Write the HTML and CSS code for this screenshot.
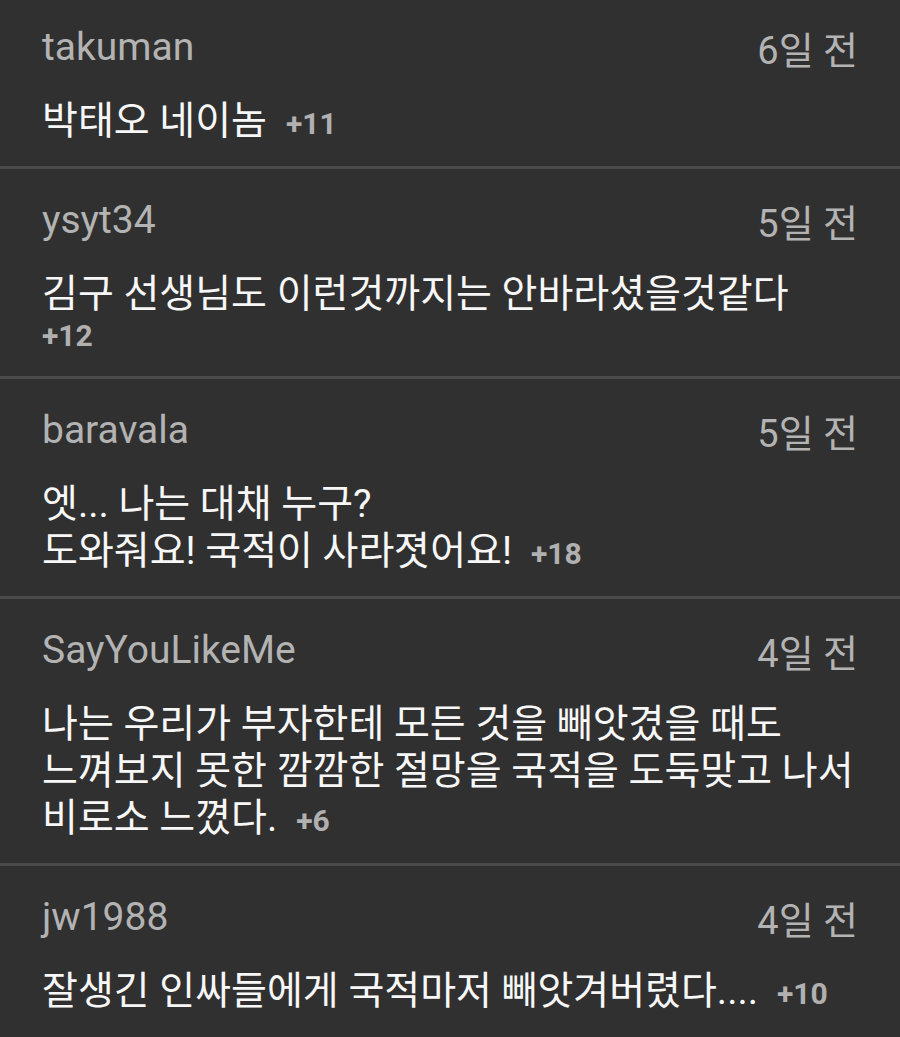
FILE: index.html
```html
<!DOCTYPE html>
<html lang="ko">
<head>
<meta charset="utf-8">
<link rel="stylesheet" href="styles.css">
</head>
<body>
<ul class="comments">
  <li class="comment">
    <div class="meta"><span class="user">takuman</span><span class="date">6일 전</span></div>
    <p class="body"><span class="text">박태오 네이놈</span> <span class="votes">+11</span></p>
  </li>
  <li class="comment">
    <div class="meta"><span class="user">ysyt34</span><span class="date">5일 전</span></div>
    <p class="body"><span class="text">김구 선생님도 이런것까지는 안바라셨을것같다</span><br><span class="votes">+12</span></p>
  </li>
  <li class="comment">
    <div class="meta"><span class="user">baravala</span><span class="date">5일 전</span></div>
    <p class="body"><span class="text">엣... 나는 대채 누구?<br>도와줘요! 국적이 사라졋어요!</span> <span class="votes">+18</span></p>
  </li>
  <li class="comment">
    <div class="meta"><span class="user">SayYouLikeMe</span><span class="date">4일 전</span></div>
    <p class="body"><span class="text">나는 우리가 부자한테 모든 것을 빼앗겼을 때도<br>느껴보지 못한 깜깜한 절망을 국적을 도둑맞고 나서<br>비로소 느꼈다.</span> <span class="votes">+6</span></p>
  </li>
  <li class="comment">
    <div class="meta"><span class="user">jw1988</span><span class="date">4일 전</span></div>
    <p class="body"><span class="text">잘생긴 인싸들에게 국적마저 빼앗겨버렸다....</span> <span class="votes">+10</span></p>
  </li>
</ul>
</body>
</html>
```

FILE: styles.css
```css
html, body {
  margin: 0;
  padding: 0;
  background: #303030;
}
body {
  font-family: Roboto, "Noto Sans CJK KR", sans-serif;
  width: 900px;
  height: 1037px;
  overflow: hidden;
}
.comments {
  list-style: none;
  margin: 0;
  padding: 0;
}
.comment {
  padding: 29px 42px 21px 42px;
  border-bottom: 3px solid #4a4a4a;
}
.comment:first-child {
  padding-top: 25px;
}
.comment:last-child {
  border-bottom: none;
}
.meta {
  display: flex;
  justify-content: space-between;
  align-items: center;
  height: 44px;
  color: #b3b3b3;
}
.user {
  font-size: 39px;
}
.date {
  font-size: 38px;
}
.body {
  margin: 29px 0 0 0;
  font-size: 28px;
  line-height: 36px;
}
.text {
  font-size: 39px;
  line-height: 47px;
  color: #f7f7f7;
}
.votes {
  font-size: 30px;
  font-weight: 700;
  color: #b0b0b0;
  margin-left: 12px;
}
.body br + .votes {
  margin-left: 0;
}
```
